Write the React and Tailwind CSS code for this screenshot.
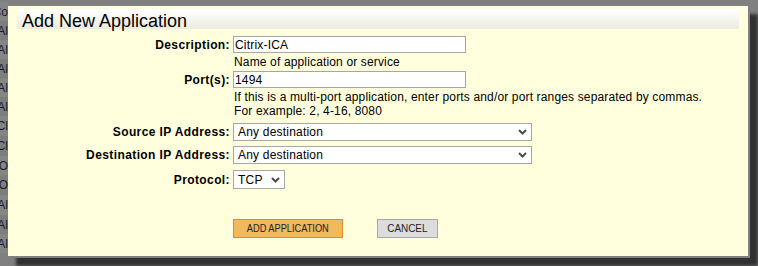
import React from "react";

const stripRows = [
  { t: "Co", h: 19 },
  { t: "Al", h: 19 },
  { t: "Al", h: 19 },
  { t: "Al", h: 19 },
  { t: "Al", h: 19 },
  { t: "Al", h: 19 },
  { t: "Cl", h: 20 },
  { t: "Cl", h: 20 },
  { t: "O", h: 19 },
  { t: "O", h: 20 },
  { t: "Al", h: 20 },
  { t: "Al", h: 19 },
  { t: "Al", h: 19 },
];

function Chevron() {
  return (
    <svg width="9" height="6" viewBox="0 0 9 6" className="shrink-0">
      <path d="M1 1 L4.5 4.5 L8 1" fill="none" stroke="#4d4d4d" strokeWidth="2" />
    </svg>
  );
}

function Select({ value, width, height }) {
  return (
    <div
      className={`flex items-center justify-between bg-white border border-[#a6a6a6] pl-[4px] pr-[4px] ${width} ${height}`}
    >
      <span className="text-[12px] leading-none text-black tracking-[0.2px]">{value}</span>
      <Chevron />
    </div>
  );
}

function Label({ children }) {
  return (
    <div className="w-[225px] shrink-0 text-right pr-[3px] text-[12px] font-bold text-black leading-none tracking-[0.4px]">
      {children}
    </div>
  );
}

export default function App() {
  return (
    <div
      className="w-[758px] h-[266px] bg-[#808080] flex overflow-hidden"
      style={{ fontFamily: '"Liberation Sans", Arial, sans-serif' }}
    >
      {/* underlying page strip */}
      <div className="w-[8px] shrink-0 flex flex-col pt-[2px] overflow-hidden">
        {stripRows.map((r, i) => (
          <div
            key={i}
            className={`flex justify-end items-center shrink-0 overflow-hidden ${
              i % 2 === 0 ? "bg-[#858585]" : "bg-[#7d7d7d]"
            }`}
            style={{ height: r.h }}
          >
            <span className="shrink-0 text-[12px] leading-none text-[#1c1c28] whitespace-nowrap">
              {r.t}
            </span>
          </div>
        ))}
      </div>

      {/* dialog */}
      <div className="mt-[6px] w-[742px] h-[252px] shrink-0 bg-[#ffffdd] border-r-2 border-b-2 border-[#808080] shadow-[8px_8px_3px_rgba(0,0,0,0.62)] flex flex-col">
        <div className="mt-[3px] mx-[9px] h-[20px] bg-gradient-to-b from-[#ffffff] to-[#ebebdf]">
          <div className="pl-[5px] pt-[3px] text-[18px] leading-[18px] text-black">
            Add New Application
          </div>
        </div>

        {/* Description */}
        <div className="mt-[7px] flex items-center h-[17px]">
          <Label>Description:</Label>
          <div className="w-[233px] h-[17px] bg-white border border-[#a6a6a6] pl-[1px] flex items-center text-[12px] leading-none text-black tracking-[0.2px]">
            Citrix-ICA
          </div>
        </div>
        <div className="pl-[226px] pt-[2px] pb-[2px] text-[12px] leading-[14px] text-black tracking-[0.15px]">
          Name of application or service
        </div>

        {/* Ports */}
        <div className="flex items-center h-[17px]">
          <Label>Port(s):</Label>
          <div className="w-[233px] h-[17px] bg-white border border-[#a6a6a6] pl-[1px] flex items-center text-[12px] leading-none text-black tracking-[0.2px]">
            1494
          </div>
        </div>
        <div className="pl-[226px] pt-[2px] text-[12px] leading-[14px] text-black tracking-[0.15px]">
          <div>If this is a multi-port application, enter ports and/or port ranges separated by commas.</div>
          <div>For example: 2, 4-16, 8080</div>
        </div>

        {/* Source */}
        <div className="mt-[5px] flex items-center h-[18px]">
          <Label>Source IP Address:</Label>
          <Select value="Any destination" width="w-[299px]" height="h-[18px]" />
        </div>

        {/* Destination */}
        <div className="mt-[5px] flex items-center h-[18px]">
          <Label>Destination IP Address:</Label>
          <Select value="Any destination" width="w-[299px]" height="h-[18px]" />
        </div>

        {/* Protocol */}
        <div className="mt-[6px] flex items-center h-[19px]">
          <Label>Protocol:</Label>
          <Select value="TCP" width="w-[52px]" height="h-[19px]" />
        </div>

        {/* Buttons */}
        <div className="mt-[30px] pl-[225px] flex gap-[34px]">
          <button className="w-[110px] h-[19px] bg-[#f0b95c] border border-[#e08e1c] flex items-center justify-center">
            <span className="inline-block whitespace-nowrap text-[11px] leading-none text-[#222222] scale-x-[0.84]">
              ADD APPLICATION
            </span>
          </button>
          <button className="w-[61px] h-[19px] bg-[#dcdcdc] border border-[#a9a9a9] flex items-center justify-center">
            <span className="inline-block whitespace-nowrap text-[11px] leading-none text-[#222222] scale-x-[0.9]">
              CANCEL
            </span>
          </button>
        </div>
      </div>
    </div>
  );
}
